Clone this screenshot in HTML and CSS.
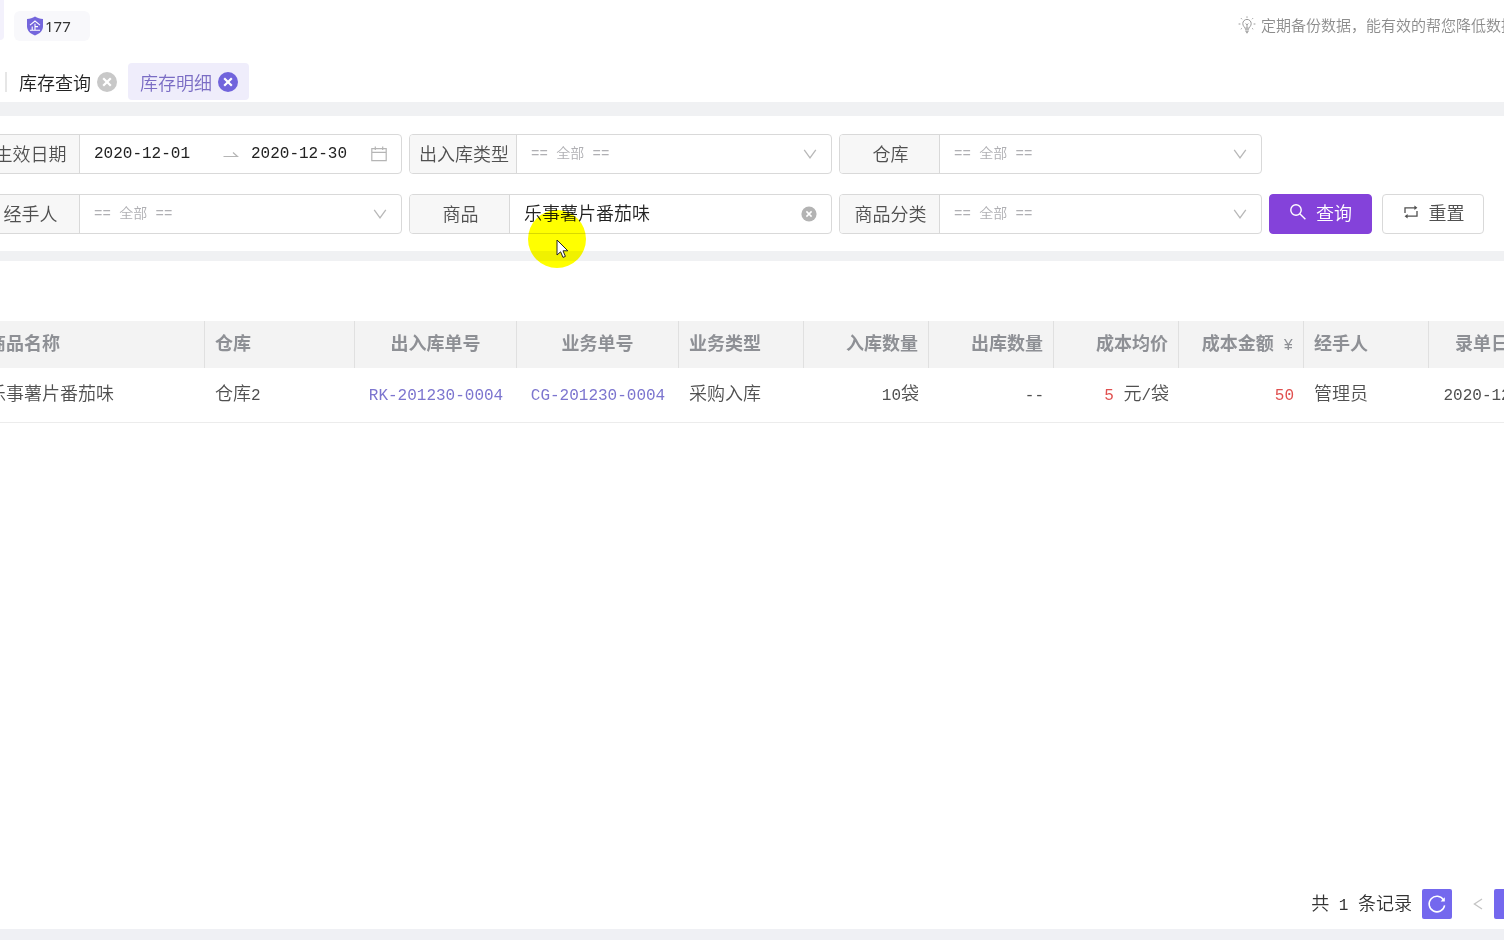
FILE: index.html
```
<!DOCTYPE html>
<html lang="zh-CN">
<head>
<meta charset="utf-8">
<title>库存明细</title>
<link rel="stylesheet" href="styles.css">
</head>
<body>
<div class="page">
  <header class="top">
    <div class="top-left">
      <span class="edge"></span>
      <div class="badge">
        <svg width="18" height="20" viewBox="0 0 18 20"><path d="M9 0.5 C11.5 2.3 14 2.8 17 3 V10.5 C17 15 13 18 9 19.5 C5 18 1 15 1 10.5 V3 C4 2.8 6.5 2.3 9 0.5Z" fill="#7466dc"/><path d="M4 9.2 L9 5 L14 9.2 M9 7.8 V14 M9 10.6 H12 M6.2 10.5 V14 M4 14.3 H14" fill="none" stroke="#fff" stroke-width="1.1"/></svg>
        <span>177</span>
      </div>
    </div>
    <p class="tip">
      <svg width="18" height="18" viewBox="0 0 18 18" fill="none" stroke="#999" stroke-width="1"><path d="M6.8 12.2 C6.8 10.8 4.8 10.2 4.8 7.6 A4.2 4.2 0 0 1 13.2 7.6 C13.2 10.2 11.2 10.8 11.2 12.2Z M7 13.8 H11 M7.4 15.3 H10.6 M8 16.7 H10 M9 12 V8.6 M7.6 7.6 L9 8.8 L10.4 7.6"/><path d="M9 0.4 V1.8 M3 2.2 L4 3.2 M15 2.2 L14 3.2 M0.6 8 H2.4 M15.6 8 H17.4 M2.8 13.2 L3.8 12.4 M15.2 13.2 L14.2 12.4"/></svg>
      <span>定期备份数据，能有效的帮您降低数据</span>
    </p>
  </header>

  <nav class="tabs">
    <span class="bar"></span>
    <div class="tab">
      <a href="#">库存查询</a>
      <button class="close" type="button" aria-label="关闭"><svg width="20" height="20" viewBox="0 0 20 20"><circle cx="10" cy="10" r="10"/><path d="M6.2 6.2 L13.8 13.8 M13.8 6.2 L6.2 13.8" stroke="#fff" stroke-width="2.2"/></svg></button>
    </div>
    <div class="tab active">
      <a href="#">库存明细</a>
      <button class="close" type="button" aria-label="关闭"><svg width="20" height="20" viewBox="0 0 20 20"><circle cx="10" cy="10" r="10"/><path d="M6.2 6.2 L13.8 13.8 M13.8 6.2 L6.2 13.8" stroke="#fff" stroke-width="2.2"/></svg></button>
    </div>
  </nav>

  <form class="filters">
    <div class="field">
      <label for="from">生效日期</label>
      <div class="control dates">
        <input id="from" type="text" value="2020-12-01">
        <svg class="arrow" width="16" height="10" viewBox="0 0 16 10"><path d="M0.5 7.5 H14.5 L10 3.5" fill="none" stroke="#b5b5b5" stroke-width="1.2"/></svg>
        <input class="to" type="text" aria-label="结束日期" value="2020-12-30">
        <svg width="16" height="16" viewBox="0 0 16 16" fill="none" stroke="#b5b5b5" stroke-width="1.2"><path d="M0.8 2.6 H15.2 V14.6 H0.8Z M0.8 6.4 H15.2 M4.3 0.4 V4 M11.7 0.4 V4"/></svg>
      </div>
    </div>
    <div class="field">
      <label for="type">出入库类型</label>
      <div class="control">
        <select id="type"><option>== 全部 ==</option></select>
        <svg class="chev" width="14" height="10" viewBox="0 0 14 10"><path d="M1.2 0.8 L7 8.8 L12.8 0.8"/></svg>
      </div>
    </div>
    <div class="field">
      <label for="house">仓库</label>
      <div class="control">
        <select id="house"><option>== 全部 ==</option></select>
        <svg class="chev" width="14" height="10" viewBox="0 0 14 10"><path d="M1.2 0.8 L7 8.8 L12.8 0.8"/></svg>
      </div>
    </div>
    <div class="field start">
      <label for="person">经手人</label>
      <div class="control">
        <select id="person"><option>== 全部 ==</option></select>
        <svg class="chev" width="14" height="10" viewBox="0 0 14 10"><path d="M1.2 0.8 L7 8.8 L12.8 0.8"/></svg>
      </div>
    </div>
    <div class="field">
      <label for="goods">商品</label>
      <div class="control">
        <input id="goods" class="goods" type="text" value="乐事薯片番茄味">
        <button class="clear" type="button" aria-label="清除"><svg width="16" height="16" viewBox="0 0 16 16"><circle cx="8" cy="8" r="7.6" fill="#b3b3b3"/><path d="M5.4 5.4 L10.6 10.6 M10.6 5.4 L5.4 10.6" stroke="#fff" stroke-width="1.5"/></svg></button>
      </div>
    </div>
    <div class="field">
      <label for="sort">商品分类</label>
      <div class="control">
        <select id="sort"><option>== 全部 ==</option></select>
        <svg class="chev" width="14" height="10" viewBox="0 0 14 10"><path d="M1.2 0.8 L7 8.8 L12.8 0.8"/></svg>
      </div>
    </div>
    <div class="actions">
      <button class="btn primary" type="button">
        <svg width="18" height="18" viewBox="0 0 18 18" fill="none" stroke="currentColor" stroke-width="1.4"><circle cx="7" cy="7" r="5.2"/><path d="M10.8 10.8 L16.4 16.2"/></svg>
        <span>查询</span>
      </button>
      <button class="btn" type="button">
        <svg width="18" height="18" viewBox="0 0 18 18" fill="none" stroke="currentColor" stroke-width="1.3"><path d="M3 10 V4.8 H14 M15 8 V13.2 H4"/><path d="M12.4 2.6 L15.4 4.8 L12.4 7Z M5.6 11 L2.6 13.2 L5.6 15.4Z" fill="currentColor" stroke="none"/></svg>
        <span>重置</span>
      </button>
    </div>
  </form>

  <main class="content">
    <div class="table-wrap">
      <table>
        <colgroup><col class="w-name"><col class="w-house"><col class="w-no"><col class="w-no"><col><col><col><col><col><col><col></colgroup>
        <thead>
          <tr><th>商品名称</th><th>仓库</th><th class="c">出入库单号</th><th class="c">业务单号</th><th>业务类型</th><th class="r">入库数量</th><th class="r">出库数量</th><th class="r">成本均价</th><th class="r">成本金额<span class="num"> ¥</span></th><th>经手人</th><th class="c">录单日期</th></tr>
        </thead>
        <tbody>
          <tr><td>乐事薯片番茄味</td><td>仓库<span class="num">2</span></td><td class="c"><a class="num" href="#">RK-201230-0004</a></td><td class="c"><a class="num" href="#">CG-201230-0004</a></td><td>采购入库</td><td class="r"><span class="num">10</span>袋</td><td class="r"><span class="num">--</span></td><td class="r"><span class="num red">5</span><span class="num"> </span>元<span class="num">/</span>袋</td><td class="r"><span class="num red">50</span></td><td>管理员</td><td class="c"><span class="num">2020-12-30</span></td></tr>
        </tbody>
      </table>
    </div>
    <div class="pager">
      <p>共<span class="num"> 1 </span>条记录</p>
      <button class="sq" type="button" aria-label="刷新"><svg width="20" height="20" viewBox="0 0 20 20"><path d="M16.6 6 A7.8 7.8 0 1 0 17.6 11.4" fill="none" stroke="#fff" stroke-width="1.5"/><path d="M17.8 3.2 V7.6 H13.6Z" fill="#fff"/></svg></button>
      <button class="prev" type="button" aria-label="上一页"><svg width="10" height="12" viewBox="0 0 10 12"><path d="M9 1 L1.4 6 L9 11" fill="none" stroke="#c4c4c4" stroke-width="1.3"/></svg></button>
      <button class="sq" type="button" aria-label="第一页"></button>
    </div>
  </main>
</div>
<div class="spot"></div>
<svg class="pointer" width="14" height="20" viewBox="0 0 14 20"><path d="M1 1 V16 L4.6 12.8 L7 18.4 L9.4 17.4 L7 11.8 H11.8Z" fill="#fff" stroke="#222" stroke-width="1"/></svg>
</body>
</html>
```
FILE: styles.css
```
* { box-sizing: border-box; }
body {
  margin: 0;
  background: #fff;
  color: #505050;
  font-family: "Noto Sans CJK SC", sans-serif;
  font-size: 18px;
  font-weight: 350;
  line-height: 24px;
  overflow-x: hidden;
}
button, input, select { font: inherit; color: inherit; border: 0; padding: 0; margin: 0; background: none; outline: 0; }
a { color: inherit; text-decoration: none; }
p { margin: 0; }
svg { display: block; flex: none; }
.num { font-family: "Liberation Mono", "Noto Sans CJK SC", monospace; font-size: 16px; font-weight: 400; white-space: pre; }
.page { display: flex; flex-direction: column; min-height: 100vh; overflow: hidden; border-bottom: 11px solid #eff0f4; }

.top { display: flex; justify-content: space-between; height: 52px; }
.top-left { display: flex; gap: 10px; }
.edge { width: 4px; height: 40px; background: #f3f1fc; border-radius: 0 0 6px 0; }
.badge { display: flex; align-items: center; gap: 1px; height: 30px; margin-top: 11px; padding: 0 19px 0 12px; background: #f8f8fb; border-radius: 6px; color: #333; font-family: "Noto Sans", sans-serif; font-size: 15px; font-weight: 400; }
.tip { display: flex; align-items: center; gap: 5px; width: 266px; height: 50px; font-size: 15px; color: #8c8c8c; white-space: nowrap; }

.tabs { display: flex; align-items: center; height: 50px; padding: 9px 0 0 5px; }
.bar { width: 2px; height: 20px; background: #e6e6e6; }
.tab { display: flex; align-items: center; gap: 6px; height: 37px; padding: 0 11px 0 12px; color: #222; border-radius: 4px; }
.tab.active { background: #efedfb; color: #7a6cc4; }
.close { fill: #c8c8c8; }
.active .close { fill: #7164dc; }

.filters { display: grid; grid-template-columns: repeat(3, minmax(0, 1fr)) auto; gap: 20px 7px; margin-left: -21px; padding: 18px 20px 17px 0; border: 0 solid #f0f1f3; border-width: 14px 0 10px; }
.field { display: flex; height: 40px; border: 1px solid #d9d9d9; border-radius: 4px; background: #fff; }
.field.start { grid-column: 1; }
.field label { display: flex; align-items: center; justify-content: center; min-width: 100px; padding: 0 7px 3px 9px; background: #f7f7f7; border-right: 1px solid #d9d9d9; border-radius: 3px 0 0 3px; white-space: nowrap; }
.control { display: flex; flex: 1; align-items: center; min-width: 0; padding: 0 14px; }
.control select { flex: 1; min-width: 0; height: 100%; appearance: none; color: #b0b0b4; font-family: "Liberation Mono", "Noto Sans CJK SC", monospace; font-size: 14px; }
.control input { flex: 1; min-width: 0; color: #222; font-family: "Liberation Mono", "Noto Sans CJK SC", monospace; font-size: 16px; font-weight: 400; }
.control input.goods { padding-bottom: 4px; font-family: "Noto Sans CJK SC", sans-serif; font-size: 18px; font-weight: 350; }
.control input.to { flex: 0 1 120px; }
.arrow { margin-right: 12px; }
.chev { fill: none; stroke: #b8b8b8; stroke-width: 1.3; pointer-events: none; }
.actions { display: flex; gap: 10px; }
.btn { display: flex; align-items: center; justify-content: center; gap: 9px; width: 102px; height: 40px; padding-bottom: 4px; border: 1px solid #d9d9d9; border-radius: 4px; }
.btn.primary { width: 103px; background: #8442da; border-color: #8442da; color: #fff; }

.content { display: flex; flex: 1; flex-direction: column; justify-content: space-between; padding: 60px 0 10px; }
.table-wrap { margin-left: -22px; overflow: hidden; }
table { width: 1576px; table-layout: fixed; border-collapse: separate; border-spacing: 0; }
.w-name { width: 227px; }
.w-house { width: 150px; }
.w-no { width: 162px; }
th, td { padding: 9px 10px 0; text-align: left; vertical-align: baseline; white-space: nowrap; }
th { height: 47px; background: #f3f3f3; border-right: 1px solid #e0e0e0; color: #8e9095; font-weight: 700; }
td { height: 55px; padding-top: 12px; border-bottom: 1px solid #ececec; }
.c { text-align: center; }
.r { text-align: right; }
td a { color: #7c75cf; }
.red { color: #e0504f; }
.pager { display: flex; align-items: center; justify-content: flex-end; margin-right: -20px; color: #333; }
.pager p { margin-right: 10px; }
.sq { display: flex; align-items: center; justify-content: center; width: 30px; height: 30px; background: #7468ee; border-radius: 2px; }
.prev { display: flex; align-items: center; justify-content: center; width: 42px; height: 30px; padding-left: 10px; }

.spot { position: absolute; left: 528px; top: 210px; width: 58px; height: 58px; border-radius: 50%; background: #ff0; mix-blend-mode: multiply; pointer-events: none; }
.pointer { position: absolute; left: 556px; top: 239px; pointer-events: none; }
```
